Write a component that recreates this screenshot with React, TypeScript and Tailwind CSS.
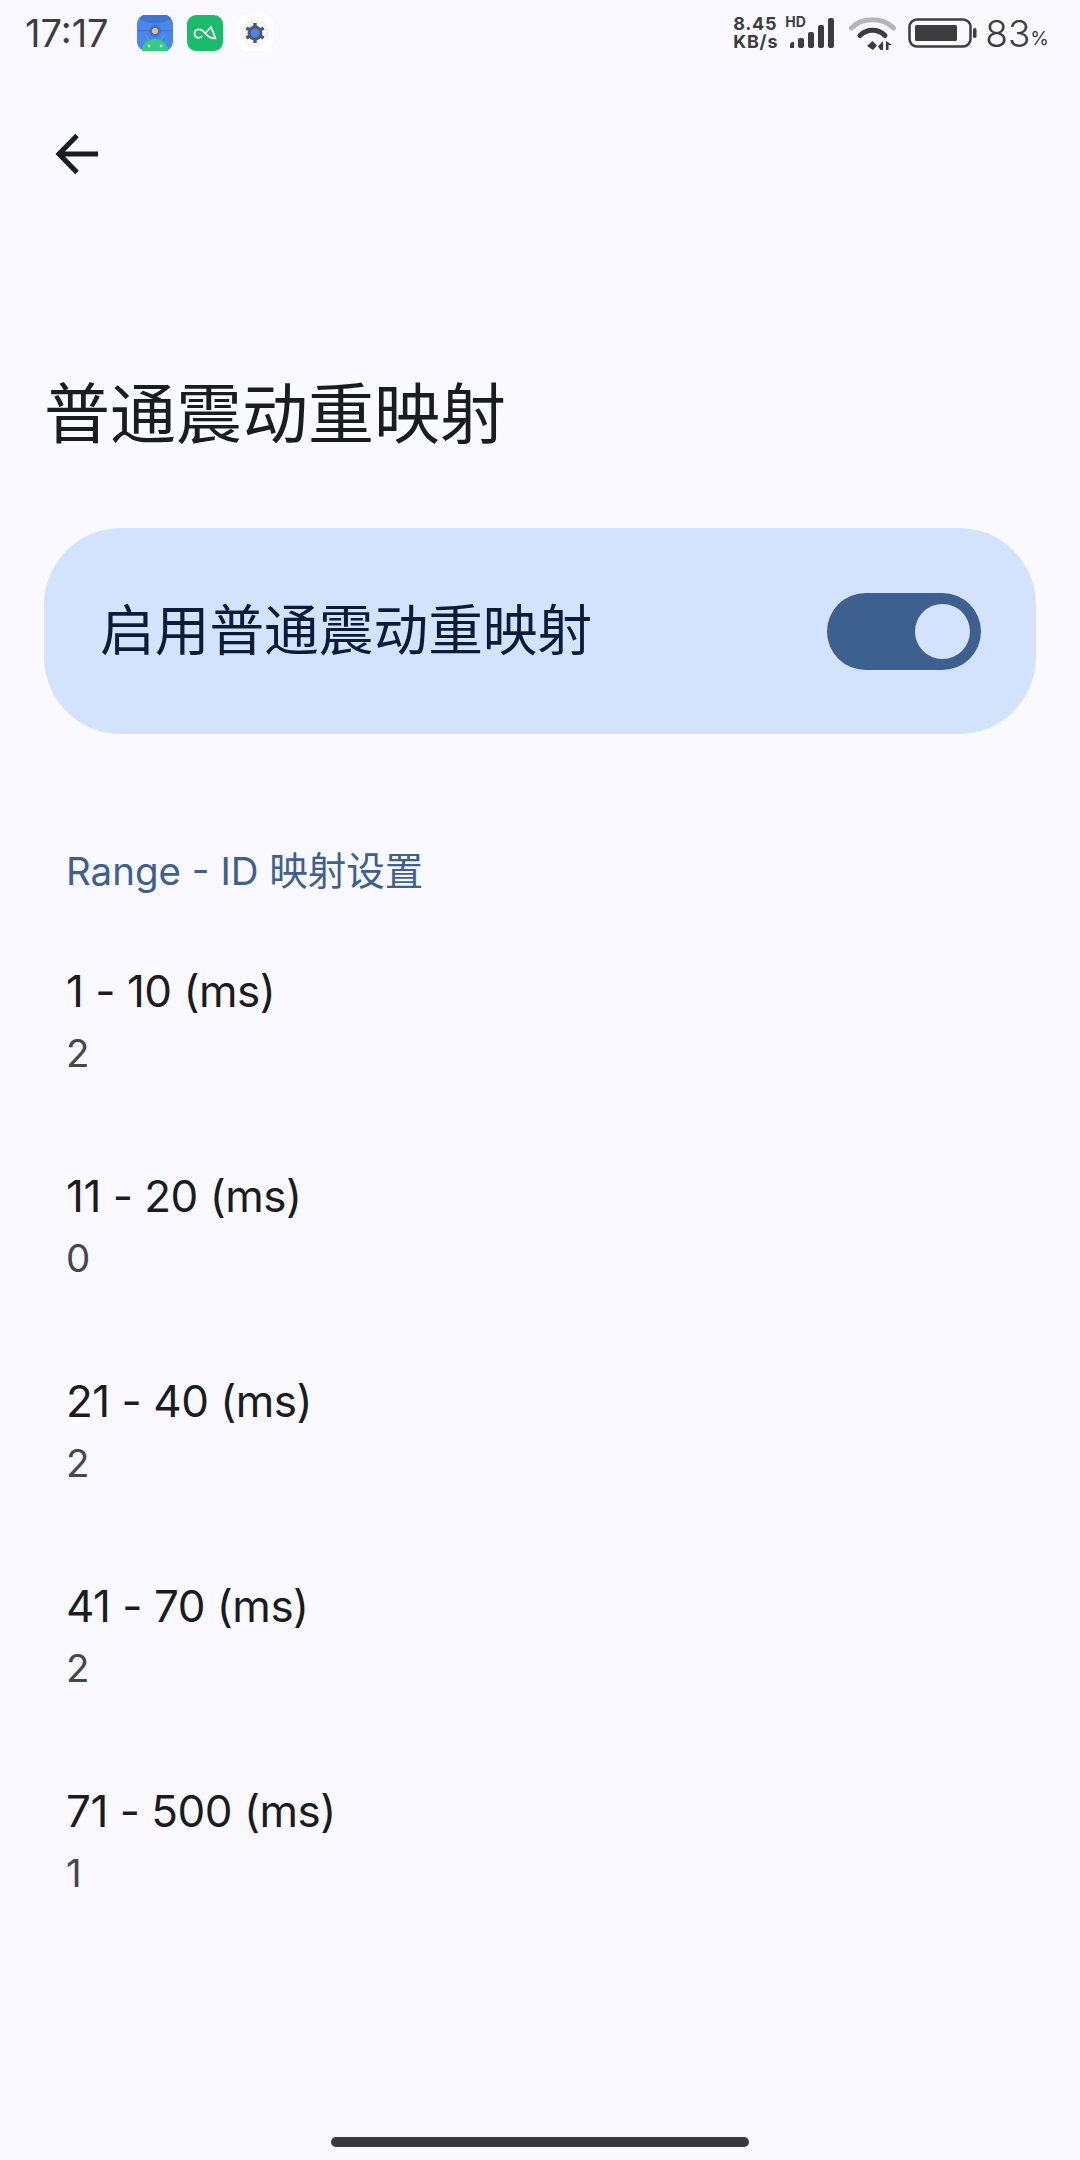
import React from "react";

const CJK = "font-['Inter','Noto_Sans_CJK_SC',sans-serif]";

const ranges = [
  { range: "1 - 10 (ms)", id: "2" },
  { range: "11 - 20 (ms)", id: "0" },
  { range: "21 - 40 (ms)", id: "2" },
  { range: "41 - 70 (ms)", id: "2" },
  { range: "71 - 500 (ms)", id: "1" },
];

function AppIcons() {
  return (
    <div className="flex items-center gap-[14px]">
      <svg width="36" height="36" viewBox="0 0 36 36">
        <rect width="36" height="36" rx="9" fill="#4c86ea" />
        <path d="M2 3C8 10 28 10 34 3L30 0H6Z" fill="#3f74d2" />
        <rect x="0" y="15" width="36" height="1.2" fill="#3f74d2" />
        <circle cx="18" cy="16" r="6" fill="#3c70cc" />
        <circle cx="18" cy="16" r="3" fill="#edc565" />
        <path d="M5 36C5 28 11 24 18 24C25 24 31 28 31 36Z" fill="#36cc7e" />
        <path d="M12 25L9 20M24 25L27 20" stroke="#36cc7e" strokeWidth="1" />
        <circle cx="12" cy="31" r="1.2" fill="#fff" />
        <circle cx="24" cy="31" r="1.2" fill="#fff" />
      </svg>
      <svg width="36" height="36" viewBox="0 0 36 36">
        <rect width="36" height="36" rx="9" fill="#1cbb6c" />
        <path
          d="M15.500 21C12.500 24 7.500 23 7.500 18.500C7.500 14 13.500 13 16.500 16.500C19.500 20.500 24 23.500 28.500 23.500L24 12L18.500 18"
          fill="none"
          stroke="#fff"
          strokeWidth="1.700"
        />
      </svg>
      <svg width="36" height="36" viewBox="0 0 36 36">
        <rect width="36" height="36" rx="9" fill="#fff" />
        <circle cx="18" cy="18" r="12.500" fill="none" stroke="#e6e8ec" strokeWidth="1" />
        <path
          d="M18 8V28M9.300 13L26.700 23M26.700 13L9.300 23"
          stroke="#4f5b6b"
          strokeWidth="3.500"
        />
        <circle cx="18" cy="18" r="7.500" fill="#4f5b6b" />
        <circle cx="18" cy="18" r="4.500" fill="#4f82ee" />
      </svg>
    </div>
  );
}

function StatusIcons() {
  return (
    <div className="flex items-center text-[#3d3d3f] font-['Inter',sans-serif]">
      <div className="flex flex-col text-[18px] font-bold leading-[18px] tracking-[0.8px]">
        <span>8.45</span>
        <span>KB/s</span>
      </div>
      <div className="ml-[10px] relative w-[50px] h-[34px]">
        <span className="absolute left-[-3px] top-[-1px] text-[14px] font-bold leading-[14px]">HD</span>
        <svg width="50" height="34" viewBox="0 0 50 34" className="absolute inset-0">
          <path d="M2 32v-3a3 3 0 0 1 3-3h1v6Z" fill="#3d3d3f" />
          <rect x="10" y="22" width="6" height="10" rx="2" fill="#3d3d3f" />
          <rect x="20" y="16" width="6" height="16" rx="2" fill="#3d3d3f" />
          <rect x="30" y="9" width="6" height="23" rx="2" fill="#3d3d3f" />
          <rect x="40" y="2" width="6" height="30" rx="2" fill="#3d3d3f" />
        </svg>
      </div>
      <svg width="48" height="36" viewBox="0 0 48 36" className="ml-[11px]">
        <path d="M2.500 13C13 2 34 2 44.500 13" fill="none" stroke="#b5b5b7" strokeWidth="5" strokeLinecap="round" />
        <path d="M11 20.500C18 13.500 29 13.500 36 20.500" fill="none" stroke="#3d3d3f" strokeWidth="5" strokeLinecap="round" />
        <path d="M18 31L23.500 26L28 30.500L24 35Z" fill="#3d3d3f" />
        <path d="M34 26V35H31.500L29 31.500ZM37 26V35H39.500V30H43Z" fill="#3d3d3f" />
      </svg>
      <svg width="70" height="30" viewBox="0 0 70 30" className="ml-[11px]">
        <rect x="1.500" y="1.500" width="61" height="27" rx="7.500" fill="none" stroke="#3d3d3f" strokeWidth="2.500" />
        <rect x="7" y="7" width="42" height="16" rx="1.500" fill="#3d3d3f" />
        <rect x="65" y="10" width="3.500" height="10" rx="1.750" fill="#3d3d3f" />
      </svg>
      <span className="ml-[7px] text-[37px] leading-none font-light">83</span>
      <span className="text-[19px] mt-[10px] leading-none">%</span>
    </div>
  );
}

export default function App() {
  return (
    <div className={`w-[1080px] h-[2160px] bg-[#f9f9ff] flex flex-col ${CJK}`}>
      <header className="h-[66px] pl-[25px] pr-[31px] flex items-center justify-between">
        <div className="flex items-center">
          <span className="w-[112px] text-[38px] leading-none text-[#3d3d3f]">17:17</span>
          <AppIcons />
        </div>
        <StatusIcons />
      </header>

      <nav className="h-[176px] pl-[54px] pt-[66px]">
        <svg width="46" height="44" viewBox="0 0 46 44">
          <path
            d="M44 22H5M23 3.500L5 22L23 40.500"
            fill="none"
            stroke="#1a1c1f"
            strokeWidth="5"
          />
        </svg>
      </nav>

      <h1 className="pl-[44px] pt-[132px] text-[66px] leading-[80px] text-[#1a1c1f]">普通震动重映射</h1>

      <div className="mx-[44px] mt-[74px] h-[206px] rounded-[77px] bg-[#d3e3fd] pl-[56px] pr-[55px] flex items-center justify-between">
        <span className="text-[54.700px] leading-none mt-[-2px] text-[#0a1c3a]">启用普通震动重映射</span>
        <div className="w-[154px] h-[77px] rounded-full bg-[#3d608f] flex items-center justify-end pr-[11px]">
          <div className="w-[55px] h-[55px] rounded-full bg-[#d3e3fd]" />
        </div>
      </div>

      <div className="pl-[66px] pt-[112px] text-[38.500px] leading-[50px] text-[#3d608f]">Range - ID 映射设置</div>

      <ul className="pt-[65px] flex flex-col gap-[86px]">
        {ranges.map((item) => (
          <li key={item.range} className="pl-[66px] flex flex-col">
            <span className="text-[44px] leading-[60px] tracking-[-0.5px] text-[#1a1c1f]">{item.range}</span>
            <span className="text-[38.500px] leading-[54px] text-[#44474b] mt-[5px]">{item.id}</span>
          </li>
        ))}
      </ul>

      <div className="mt-auto mb-[13px] mx-auto w-[418px] h-[10px] rounded-full bg-[#3a3a3c]" />
    </div>
  );
}
